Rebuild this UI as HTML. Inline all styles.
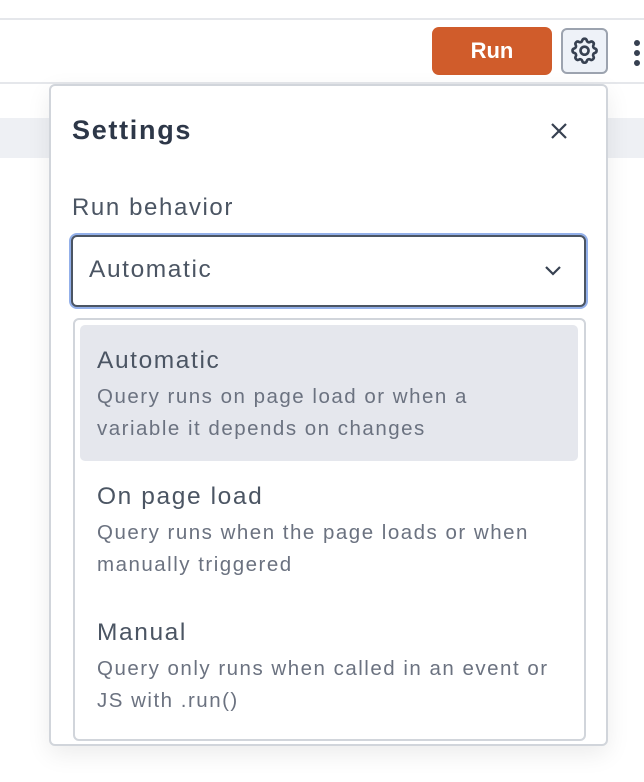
<!DOCTYPE html>
<html><head><style>
*{box-sizing:border-box;margin:0;padding:0}
body{width:644px;height:782px;background:#fff;position:relative;overflow:hidden;font-family:"Liberation Sans",sans-serif;color:#374151}
.abs{position:absolute}
.t{font-size:24.5px;letter-spacing:1.6px;color:#4b5563}
.d{font-size:20.5px;letter-spacing:1.5px;line-height:32px;color:#6b7280;white-space:nowrap}
</style></head><body>
<div class="abs" style="left:0;top:18px;width:644px;height:2px;background:#e5e7eb"></div>
<div class="abs" style="left:0;top:82px;width:644px;height:2px;background:#e5e7eb"></div>
<div class="abs" style="left:0;top:118px;width:644px;height:40px;background:#eef0f4"></div>
<div class="abs" style="left:432px;top:27px;width:120px;height:48px;background:#d05c2b;border-radius:7px;color:#fff;font-size:22px;font-weight:bold;text-align:center;line-height:48px">Run</div>
<div class="abs" style="left:561px;top:28px;width:47px;height:46px;border:2px solid #9ca3af;border-radius:6px;background:#eef2f8">
<svg width="43" height="42" viewBox="0 0 24 24" style="position:absolute;left:0;top:0"><g transform="translate(2.9,2.7) scale(0.76)" fill="none" stroke="#374151" stroke-width="2" stroke-linecap="round" stroke-linejoin="round"><path d="M10.3 4.3c.4-1.8 3-1.8 3.4 0a1.7 1.7 0 002.6 1.1c1.5-.9 3.300.8 2.4 2.4a1.7 1.7 0 001 2.5c1.8.4 1.8 3 0 3.4a1.7 1.7 0 00-1 2.6c.9 1.5-.9 3.3-2.4 2.4a1.7 1.7 0 00-2.6 1c-.4 1.8-3 1.8-3.4 0a1.7 1.7 0 00-2.5-1c-1.6.9-3.300-.9-2.4-2.4a1.7 1.7 0 00-1.1-2.6c-1.8-.4-1.8-3 0-3.4a1.7 1.7 0 001.1-2.5c-.9-1.6.8-3.3 2.4-2.4a1.7 1.7 0 002.5-1.1z"/><circle cx="12" cy="12" r="3"/></g></svg>
</div>
<div class="abs" style="left:634px;top:40px;width:6px;height:6px;border-radius:3px;background:#374151"></div>
<div class="abs" style="left:634px;top:50px;width:6px;height:6px;border-radius:3px;background:#374151"></div>
<div class="abs" style="left:634px;top:60px;width:6px;height:6px;border-radius:3px;background:#374151"></div>

<div class="abs" style="left:49px;top:84px;width:559px;height:662px;background:#fff;border:2px solid #d1d5db;border-radius:6px;box-shadow:0 8px 24px rgba(0,0,0,0.08)"></div>
<div class="abs" style="left:72px;top:115px;font-size:27px;letter-spacing:1.7px;font-weight:bold;color:#2d3748">Settings</div>
<svg class="abs" style="left:550px;top:122px" width="18" height="18" viewBox="0 0 18 18"><path d="M2 2L16 16M16 2L2 16" stroke="#374151" stroke-width="2.2"/></svg>
<div class="abs" style="left:72px;top:194px;font-size:24px;letter-spacing:1.6px;color:#4b5563">Run behavior</div>
<div class="abs" style="left:69px;top:233px;width:519px;height:76px;border:3px solid #93b0ea;border-radius:8px"></div>
<div class="abs" style="left:71px;top:235px;width:515px;height:72px;border:2px solid #4b5563;border-radius:6px;background:#fff"></div>
<div class="abs t" style="left:89px;top:256px">Automatic</div>
<svg class="abs" style="left:544px;top:265px" width="18" height="12" viewBox="0 0 18 12"><path d="M2 2L9 9L16 2" fill="none" stroke="#374151" stroke-width="2.2"/></svg>

<div class="abs" style="left:73px;top:318px;width:513px;height:423px;border:2px solid #d1d5db;border-radius:6px;background:#fff"></div>
<div class="abs" style="left:80px;top:325px;width:498px;height:136px;background:#e5e7ed;border-radius:5px"></div>
<div class="abs t" style="left:97px;top:347px">Automatic</div>
<div class="abs d" style="left:97px;top:381px">Query runs on page load or when a<br>variable it depends on changes</div>
<div class="abs t" style="left:97px;top:483px">On page load</div>
<div class="abs d" style="left:97px;top:517px;overflow:hidden;width:441px">Query runs when the page loads or when<br>manually triggered</div>
<div class="abs t" style="left:97px;top:619px">Manual</div>
<div class="abs d" style="left:97px;top:653px">Query only runs when called in an event or<br>JS with .run()</div>
</body></html>
